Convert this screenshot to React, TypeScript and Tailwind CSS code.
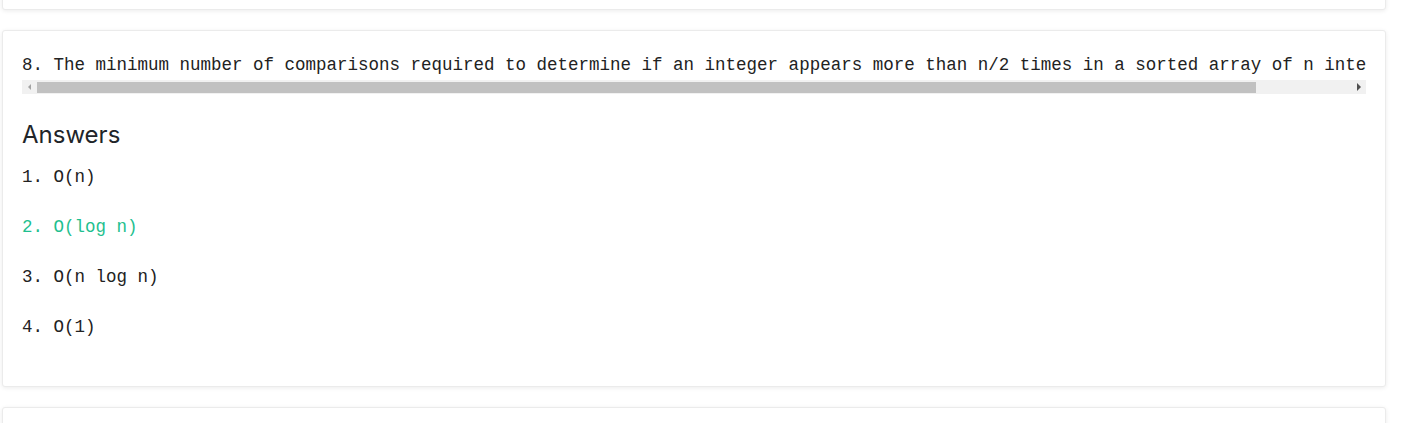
import React from "react";

const mono = { fontFamily: '"Liberation Mono", "DejaVu Sans Mono", monospace' };

export default function App() {
  const answers = [
    { t: "1. O(n)", ok: false },
    { t: "2. O(log n)", ok: true },
    { t: "3. O(n log n)", ok: false },
    { t: "4. O(1)", ok: false },
  ];
  return (
    <div className="w-[1401px] h-[423px] overflow-hidden bg-white flex flex-col gap-[20px] pl-[2px] pt-0" style={{ fontFamily: 'Inter, "Noto Sans", sans-serif' }}>
      <div className="w-[1384px] h-[30px] -mt-[20px] shrink-0 bg-white border border-[#ebebeb] rounded-[3px] shadow-[0_1px_4px_rgba(0,0,0,0.08)]" />
      <div className="w-[1384px] shrink-0 bg-white border border-[#ebebeb] rounded-[3px] shadow-[0_1px_4px_rgba(0,0,0,0.08)] px-[19px] pt-[22px] pb-[21px]">
        <div className="w-[1344px]">
          <div className="overflow-hidden whitespace-nowrap h-[25px] leading-[25px] text-[17.5px] text-[#222]" style={mono}>
            8. The minimum number of comparisons required to determine if an integer appears more than n/2 times in a sorted array of n inte
          </div>
          <div className="mt-[2px] h-[14px] bg-[#f1f1f1] flex items-center relative">
            <div className="w-[15px] h-[14px] flex items-center justify-center">
              <div className="w-0 h-0 border-t-[3px] border-b-[3px] border-r-[3px] border-t-transparent border-b-transparent border-r-[#a3a3a3]" />
            </div>
            <div className="w-[1219px] h-[11px] bg-[#c1c1c1]" />
            <div className="flex-1" />
            <div className="w-[15px] h-[14px] flex items-center justify-center">
              <div className="w-0 h-0 border-t-[4px] border-b-[4px] border-l-[4px] border-t-transparent border-b-transparent border-l-[#505050]" />
            </div>
          </div>
          <h2 className="mt-[26px] text-[24px] leading-[30px] text-[#212529] font-normal">Answers</h2>
          <div className="mt-[15px] flex flex-col" style={mono}>
            {answers.map((a) => (
              <div key={a.t} className={"h-[50px] leading-[24px] text-[17.5px] " + (a.ok ? "text-[#1fbf8f]" : "text-[#222]")}>
                {a.t}
              </div>
            ))}
          </div>
        </div>
      </div>
      <div className="w-[1384px] h-[40px] shrink-0 bg-white border border-[#ebebeb] rounded-[3px] shadow-[0_1px_4px_rgba(0,0,0,0.08)]" />
    </div>
  );
}
